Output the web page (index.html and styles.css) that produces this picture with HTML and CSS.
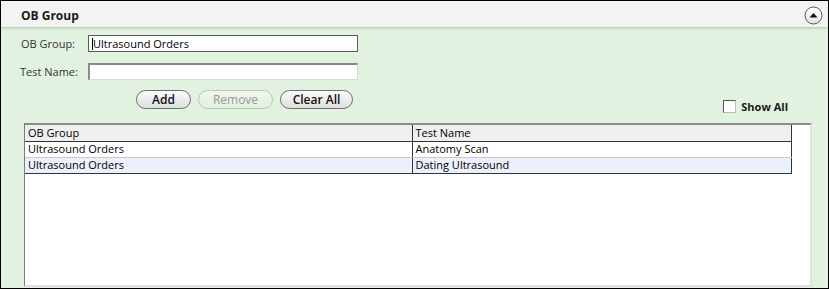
FILE: index.html
```html
<!DOCTYPE html>
<html>
<head>
<meta charset="utf-8">
<link rel="stylesheet" href="styles.css">
</head>
<body>
<div class="panel">
  <div class="panel-header">
    <span class="panel-title">OB Group</span>
    <span class="collapse-btn">
      <svg width="19" height="19" viewBox="0 0 19 19">
        <defs>
          <linearGradient id="g" x1="0" y1="0" x2="0" y2="1">
            <stop offset="0" stop-color="#ffffff"/>
            <stop offset="1" stop-color="#e4e4e4"/>
          </linearGradient>
        </defs>
        <circle cx="9.5" cy="9.5" r="8.5" fill="url(#g)" stroke="#555" stroke-width="1"/>
        <polygon points="5.5,11.5 13.5,11.5 9.5,7" fill="#111"/>
      </svg>
    </span>
  </div>
  <div class="panel-body">
    <div class="form">
      <label class="lbl lbl-group">OB Group:</label>
      <div class="input input-dark"><span class="caret"></span>Ultrasound Orders</div>
      <label class="lbl lbl-test">Test Name:</label>
      <div class="input input-inset"></div>
    </div>
    <div class="actions">
      <div class="buttons">
        <span class="btn btn-add">Add</span>
        <span class="btn btn-remove disabled">Remove</span>
        <span class="btn btn-clear">Clear All</span>
      </div>
      <label class="show-all"><span class="check"></span>Show All</label>
    </div>
    <div class="grid-box">
      <table class="grid">
        <thead>
          <tr><th class="c1">OB Group</th><th class="c2">Test Name</th></tr>
        </thead>
        <tbody>
          <tr><td>Ultrasound Orders</td><td>Anatomy Scan</td></tr>
          <tr class="alt"><td>Ultrasound Orders</td><td>Dating Ultrasound</td></tr>
        </tbody>
      </table>
    </div>
  </div>
</div>
</body>
</html>
```

FILE: styles.css
```css
* { box-sizing: border-box; }
html, body { margin: 0; padding: 0; }
body {
  font-family: "Open Sans", "Noto Sans", sans-serif;
  font-size: 11px;
  color: #000;
  width: 829px;
  height: 289px;
  overflow: hidden;
}
.panel {
  width: 829px;
  height: 289px;
  border: 1px solid #000;
  background: #e2f2e0;
  display: flex;
  flex-direction: column;
}
.panel-header {
  height: 26px;
  background: #f3f3f3;
  box-shadow: 0 1px 3px rgba(0,0,0,0.22);
  display: flex;
  align-items: center;
  justify-content: space-between;
  padding: 0 5px 0 20px;
  position: relative;
  z-index: 1;
}
.panel-title {
  font-weight: 700;
  font-size: 12px;
  color: #1a1a1a;
  margin-top: 3px;
}
.collapse-btn { display: flex; margin-top: 2px; }
.panel-body {
  flex: 1;
  display: flex;
  flex-direction: column;
  padding: 8px 16px 1px 20px;
}
.form {
  display: grid;
  grid-template-columns: 67px 270px;
  row-gap: 11px;
  align-items: center;
}
.lbl { color: #333; font-size: 11px; }
.lbl-test { margin-left: -1px; }
.input {
  height: 17px;
  background: #fff;
  font-size: 11px;
  line-height: 15px;
  padding-left: 3px;
  display: flex;
  align-items: center;
}
.input-dark { border: 1px solid #5a5a5a; }
.input-inset {
  border-top: 2px solid #8a8a8a;
  border-left: 2px solid #8a8a8a;
  border-right: 1px solid #d8d8d8;
  border-bottom: 1px solid #d8d8d8;
}
.caret {
  display: inline-block;
  width: 1px;
  height: 12px;
  background: #000;
  margin-right: 0;
}
.actions {
  display: flex;
  justify-content: space-between;
  align-items: flex-end;
  margin-top: 10px;
  padding-right: 24px;
}
.buttons {
  display: flex;
  gap: 7px;
  margin-left: 115px;
}
.btn {
  height: 19px;
  border: 1px solid #6e6e6e;
  border-radius: 10px;
  background: linear-gradient(#fbfbfb, #dedede);
  font-size: 12px;
  font-weight: 600;
  color: #111;
  display: flex;
  align-items: center;
  justify-content: center;
}
.btn-add { width: 55px; }
.btn-remove { width: 75px; }
.btn-clear { width: 73px; }
.btn.disabled {
  border-color: #b8c8b6;
  background: linear-gradient(#f0f6ef, #e2efe0);
  color: #9a9a9a;
  font-weight: 400;
}
.show-all {
  display: flex;
  align-items: center;
  gap: 5px;
  font-weight: 700;
  font-size: 11px;
  color: #1a1a1a;
  margin-bottom: -5px;
}
.check {
  width: 13px;
  height: 13px;
  background: #fff;
  border: 1px solid #555;
  border-right-color: #bbb;
  border-bottom-color: #bbb;
}
.grid-box {
  flex: 1;
  margin-top: 14px;
  margin-left: 3px;
  background: #fff;
  border-top: 2px solid #8c8c8c;
  border-left: 1px solid #7c7c7c;
  border-right: 2px solid #e2e2e2;
  border-bottom: 2px solid #e2e2e2;
}
.grid {
  border-collapse: collapse;
  width: 767px;
  font-size: 11px;
}
.grid th, .grid td {
  height: 16px;
  padding: 0 3px;
  text-align: left;
  font-weight: 400;
  white-space: nowrap;
  line-height: 14px;
}
.grid th {
  background: #efefef;
  border-bottom: 1px solid #333;
}
.grid th.c1 { width: 387px; border-right: 1px solid #333; }
.grid th.c2 { border-right: 1px solid #333; }
.grid td { border-right: 1px solid #333; }
.grid td:first-child { border-right: 1px solid #333; }
.grid tbody tr:first-child td { border-bottom: 1px solid #c8c8c8; }
.grid tr.alt td { background: #eaf1fc; border-bottom: 1px solid #333; }
```
